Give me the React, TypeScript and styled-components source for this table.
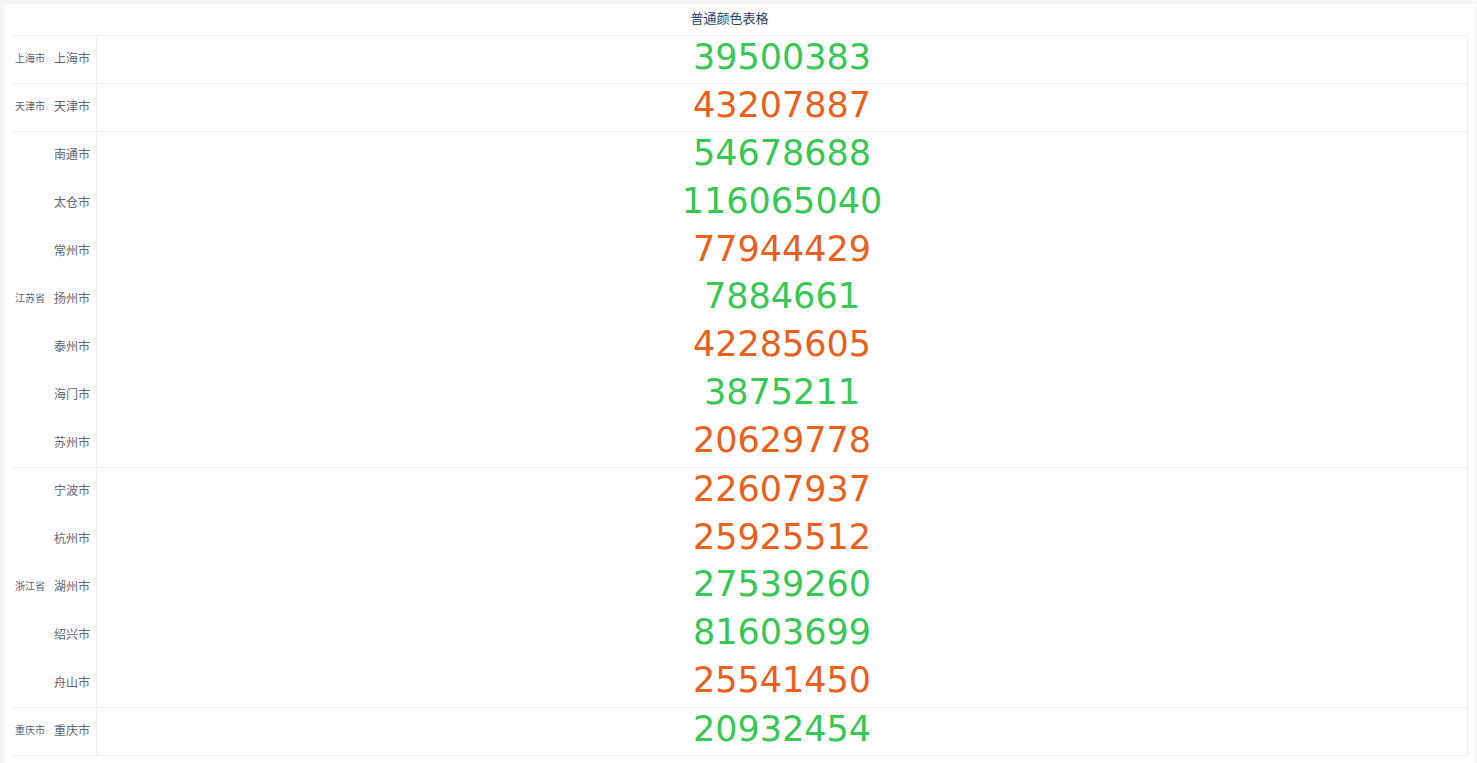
import React from "react";
import styled, { createGlobalStyle } from "styled-components";

const Global = createGlobalStyle`
  html, body { margin: 0; padding: 0; background: #f5f6f8; }
  body { font-family: "Noto Sans CJK SC", "Noto Sans", sans-serif; }
`;

const Panel = styled.div`
  margin: 4px 2px 0 4px;
  background: #ffffff;
  padding: 0 8px 7px 8px;
  min-height: 759px;
  box-sizing: border-box;
`;

const Title = styled.div`
  height: 31px;
  display: flex;
  align-items: center;
  justify-content: center;
  padding-right: 20px;
  padding-bottom: 4px;
  box-sizing: border-box;
  font-size: 13px;
  color: #2b3f66;
`;

const Table = styled.div`
  display: flex;
  flex-direction: column;
  border-top: 1px solid #efefef;
  border-right: 1px solid #ececec;
  width: 1456px;
  box-sizing: border-box;
`;

const Group = styled.div<{ $rows: number }>`
  display: grid;
  grid-template-columns: 36px 48px 1fr;
  grid-template-rows: repeat(${(p) => p.$rows}, 1fr);
  height: ${(p) => p.$rows * 48}px;
  box-sizing: border-box;
  border-bottom: 1px solid #f0f0f0;
`;

const Province = styled.div<{ $rows: number }>`
  grid-column: 1;
  grid-row: 1 / span ${(p) => p.$rows};
  display: flex;
  align-items: center;
  justify-content: center;
  padding-bottom: 4px;
  font-size: 10px;
  color: #5d6472;
`;

const City = styled.div`
  grid-column: 2;
  display: flex;
  align-items: center;
  justify-content: flex-end;
  padding: 0 6px 4px 0;
  font-size: 12px;
  color: #5d6472;
`;

const Value = styled.div<{ $hot: boolean }>`
  grid-column: 3;
  display: flex;
  align-items: center;
  justify-content: center;
  border-left: 1px solid #efefef;
  font-family: "DejaVu Sans", Verdana, sans-serif;
  font-size: 35px;
  color: ${(p) => (p.$hot ? "#e8601c" : "#36c853")};
  padding-bottom: 6px;
  box-sizing: border-box;
`;

type Row = { city: string; value: number; hot: boolean };
type G = { province: string; rows: Row[] };

const data: G[] = [
  { province: "上海市", rows: [{ city: "上海市", value: 39500383, hot: false }] },
  { province: "天津市", rows: [{ city: "天津市", value: 43207887, hot: true }] },
  {
    province: "江苏省",
    rows: [
      { city: "南通市", value: 54678688, hot: false },
      { city: "太仓市", value: 116065040, hot: false },
      { city: "常州市", value: 77944429, hot: true },
      { city: "扬州市", value: 7884661, hot: false },
      { city: "泰州市", value: 42285605, hot: true },
      { city: "海门市", value: 3875211, hot: false },
      { city: "苏州市", value: 20629778, hot: true },
    ],
  },
  {
    province: "浙江省",
    rows: [
      { city: "宁波市", value: 22607937, hot: true },
      { city: "杭州市", value: 25925512, hot: true },
      { city: "湖州市", value: 27539260, hot: false },
      { city: "绍兴市", value: 81603699, hot: false },
      { city: "舟山市", value: 25541450, hot: true },
    ],
  },
  { province: "重庆市", rows: [{ city: "重庆市", value: 20932454, hot: false }] },
];

export default function App() {
  return (
    <>
      <Global />
      <Panel>
        <Title>普通颜色表格</Title>
        <Table>
          {data.map((g) => (
            <Group key={g.province} $rows={g.rows.length}>
              <Province $rows={g.rows.length}>{g.province}</Province>
              {g.rows.map((r) => (
                <React.Fragment key={r.city}>
                  <City>{r.city}</City>
                  <Value $hot={r.hot}>{r.value}</Value>
                </React.Fragment>
              ))}
            </Group>
          ))}
        </Table>
      </Panel>
    </>
  );
}
